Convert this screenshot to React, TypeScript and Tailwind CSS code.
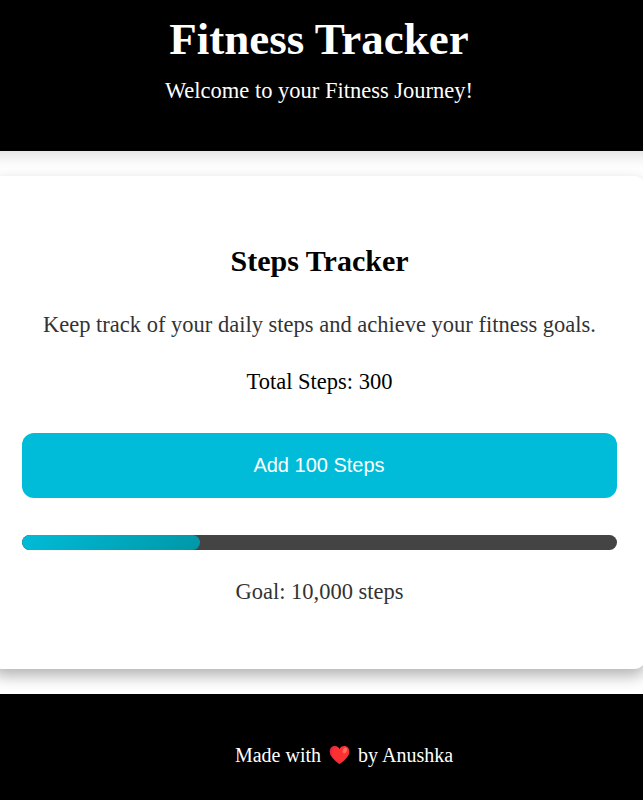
export default function App() {
  return (
    <div className="h-[800px] w-[643px] overflow-hidden bg-white font-['Liberation_Serif',serif] text-black">
      <header className="-mx-5 h-[151px] bg-black pt-[12px] text-center text-white shadow-[0_5px_15px_rgba(0,0,0,0.13)]">
        <h1 className="pr-[5px] text-[45px] font-bold leading-[54px]">Fitness Tracker</h1>
        <p className="mt-[12px] pr-[5px] text-[22.5px] leading-[26px]">Welcome to your Fitness Journey!</p>
      </header>
      <main className="mt-[25px] -ml-[9px] flex h-[493px] w-[655px] flex-col items-center rounded-[12px] bg-white pr-[29px] pl-[31px] pt-[68px] text-center shadow-[0_7px_15px_rgba(0,0,0,0.3)]">
        <h2 className="text-[30px] font-bold leading-[34px]">Steps Tracker</h2>
        <p className="mt-[34px] whitespace-nowrap text-[22.5px] leading-[26px] text-[#333]">Keep track of your daily steps and achieve your fitness goals.</p>
        <p className="mt-[31px] text-[22.5px] leading-[26px]">Total Steps: 300</p>
        <button className="mt-[38px] h-[65px] w-full rounded-[12px] bg-[#00bcd8] pr-[1px] pb-[2px] font-['Liberation_Sans',sans-serif] text-[20px] text-white">Add 100 Steps</button>
        <div className="mt-[37px] h-[15px] w-full overflow-hidden rounded-[8px] bg-[#444]">
          <div className="h-full w-[178px] rounded-[8px] bg-[linear-gradient(135deg,#00bcd8,#0097a7)]" />
        </div>
        <p className="mt-[29px] text-[22.5px] leading-[26px] text-[#333]">Goal: 10,000 steps</p>
      </main>
      <footer className="mt-[25px] flex h-[106px] justify-center bg-black pt-[49px] pl-[45px] text-[20px] leading-[24px] text-white">
        <span>Made with</span>
        <svg className="mx-[8px] mt-[2px] h-[20px] w-[21px]" viewBox="0 0 21 20">
          <defs>
            <radialGradient id="heart" cx="0.6" cy="0.4" r="0.65">
              <stop offset="0.65" stopColor="#fc3030" />
              <stop offset="1" stopColor="#d51c50" />
            </radialGradient>
          </defs>
          <path d="M10.5 19.200C8 17.500 4 14.300 2 11C-0.500 7 0.500 1 5.700 1c2.300 0 3.900 1.200 4.800 2.900C11.400 2.200 13 1 15.300 1c5.200 0 6.200 6 3.700 10c-2 3.300-6 6.500-8.500 8.200Z" fill="url(#heart)" />
          <ellipse cx="15.800" cy="5.500" rx="2" ry="3" transform="rotate(30 15.8 5.5)" fill="#ff6a61" />
        </svg>
        <span>by Anushka</span>
      </footer>
    </div>
  );
}
